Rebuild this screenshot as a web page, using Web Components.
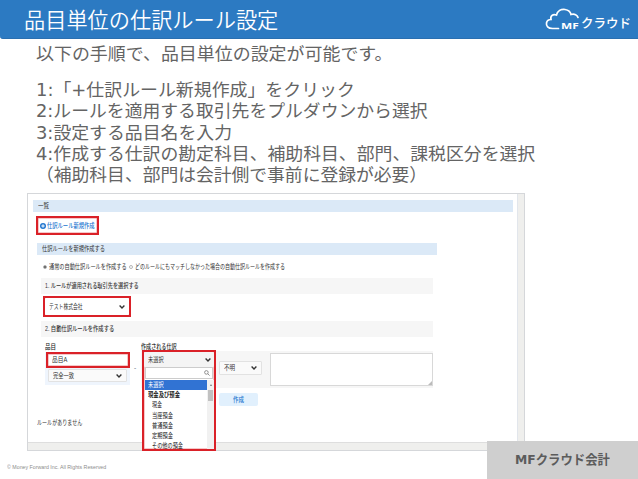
<!DOCTYPE html>
<html lang="ja">
<head>
<meta charset="utf-8">
<title>品目単位の仕訳ルール設定</title>
<style>
  body {
    margin: 0;
    width: 638px;
    height: 479px;
    overflow: hidden;
    background: #fff;
    font-family: "DejaVu Sans", "Noto Sans CJK JP", sans-serif;
  }
</style>
</head>
<body>
<slide-page></slide-page>

<script>
// one line of text, squeezed horizontally to the width attribute
class FitText extends HTMLElement {
  constructor() {
    super();
    this.attachShadow({ mode: 'open' });
    this.shadowRoot.innerHTML = `
      <style>
        :host {
          display: block;
          flex: none;
          white-space: nowrap;
        }
        span {
          display: inline-block;
          transform-origin: left center;
        }
      </style>
      <span><slot></slot></span>
    `;
  }

  connectedCallback() {
    const width = Number(this.getAttribute('width'));
    const span = this.shadowRoot.querySelector('span');
    this.style.width = `${width}px`;
    span.style.transform = `scaleX(${width / span.offsetWidth})`;
  }
}

class SlideHeader extends HTMLElement {
  constructor() {
    super();
    this.attachShadow({ mode: 'open' });
    this.shadowRoot.innerHTML = `
      <style>
        :host {
          display: flex;
          align-items: center;
          justify-content: space-between;
          box-sizing: border-box;
          height: 39px;
          padding: 0 7px 0 24px;
          background: #2c7ac2;
          border-bottom: 1px solid #2a6fb0;
          border-radius: 0 0 0 3px;
          color: #fff;
        }
        .title {
          font-size: 21.2px;
          font-weight: 350;
          line-height: 38px;
          padding-top: 3px;
        }
        .logo {
          display: flex;
          align-items: flex-end;
          height: 24px;
          margin-top: 2px;
        }
        svg {
          width: 35px;
          height: 24px;
          margin-right: -19px;
        }
        .mf {
          font: bold 9.5px/10px "Open Sans", sans-serif;
          padding-bottom: 1px;
          margin-right: 3px;
        }
        .kana {
          font-size: 12.5px;
          font-weight: 500;
          line-height: 13px;
          padding-bottom: 2px;
        }
      </style>
      <fit-text class="title" width="254">品目単位の仕訳ルール設定</fit-text>
      <div class="logo">
        <svg viewBox="0 0 35 24" fill="none" stroke="#fff" stroke-width="1.7" stroke-linecap="round">
          <path d="M13.500 20.500H7.500C3 20.500 1 18 1.500 15C2 12.500 4 11.500 6 11.500C5 8 8 5.500 11.500 7C12.500 3 16 1 20 1.500C23.500 2 25.500 4 26 6.500C29.500 5.500 32.500 7 33 9.500"/>
        </svg>
        <fit-text class="mf" width="17.500">MF</fit-text>
        <fit-text class="kana" width="50">クラウド</fit-text>
      </div>
    `;
  }
}

class StepList extends HTMLElement {
  constructor() {
    super();
    this.attachShadow({ mode: 'open' });
    this.shadowRoot.innerHTML = `
      <style>
        :host {
          display: block;
          padding: 5px 0 0 36px;
          font-size: 17.6px;
          line-height: 21.2px;
          color: #646464;
        }
        .lead {
          margin-bottom: 15px;
        }
      </style>
      <fit-text class="lead" width="356">以下の手順で、品目単位の設定が可能です。</fit-text>
      <fit-text width="318.500">1:「+仕訳ルール新規作成」をクリック</fit-text>
      <fit-text width="392">2:ルールを適用する取引先をプルダウンから選択</fit-text>
      <fit-text width="196">3:設定する品目名を入力</fit-text>
      <fit-text width="499">4:作成する仕訳の勘定科目、補助科目、部門、課税区分を選択</fit-text>
      <fit-text width="391">（補助科目、部門は会計側で事前に登録が必要）</fit-text>
    `;
  }
}

// select box with a chevron at its right end
class SelectBox extends HTMLElement {
  constructor() {
    super();
    this.attachShadow({ mode: 'open' });
    this.shadowRoot.innerHTML = `
      <style>
        :host {
          display: flex;
          align-items: center;
          justify-content: space-between;
          box-sizing: border-box;
          border: 1px solid #e2e2e2;
          border-radius: 1px;
          background: #fafafa;
          padding: 0 4px;
        }
        svg {
          width: 6px;
          height: 4px;
        }
      </style>
      <slot></slot>
      <svg viewBox="0 0 6 4" fill="none" stroke="#333" stroke-width="1.4">
        <path d="M.6 .6L3 3L5.400 .6"/>
      </svg>
    `;
  }
}

// red frame that marks a step
class RedFrame extends HTMLElement {
  constructor() {
    super();
    this.attachShadow({ mode: 'open' });
    this.shadowRoot.innerHTML = `
      <style>
        :host {
          display: flex;
          box-sizing: border-box;
          border: 2px solid #da2128;
          box-shadow: inset 0 0 0 .5px #da212880;
        }
      </style>
      <slot></slot>
    `;
  }
}

class AccountMenu extends HTMLElement {
  constructor() {
    super();
    this.attachShadow({ mode: 'open' });
    this.shadowRoot.innerHTML = `
      <style>
        :host {
          display: block;
          background: #fff;
        }
        red-frame {
          width: 74px;
          height: 101px;
          flex-direction: column;
          overflow: hidden;
        }
        select-box {
          height: 15px;
          flex: none;
          border: 0;
          background: #f4f4f4;
          padding: 1px 3px 0 4px;
        }
        .search {
          display: flex;
          align-items: center;
          justify-content: flex-end;
          flex: none;
          box-sizing: border-box;
          height: 12px;
          margin: 0 1px 1px;
          padding-right: 2px;
          border: 1px solid #ccc;
        }
        .search svg {
          width: 6px;
          height: 6px;
        }
        .list {
          display: flex;
          flex: 1;
          min-height: 0;
          padding-left: 1px;
        }
        .items {
          flex: 1;
          line-height: 10.2px;
          color: #222;
        }
        .items fit-text {
          margin-left: 7px;
        }
        .items .group {
          margin-left: 3px;
          font-weight: bold;
        }
        .selected {
          height: 10px;
          padding-left: 3px;
          background: #3173d3;
          color: #fff;
        }
        .items .selected fit-text {
          margin-left: 0;
        }
        .scroll {
          width: 7px;
          background: #f1f1f1;
        }
        .arrow {
          margin: 4px auto 4px;
          width: 0;
          border: 1.5px solid transparent;
          border-bottom: 2px solid #777;
          border-top: 0;
        }
        .thumb {
          height: 11px;
          margin: 0 1px;
          background: #c1c1c1;
        }
      </style>
      <red-frame>
        <select-box><fit-text width="16">未選択</fit-text></select-box>
        <div class="search">
          <svg viewBox="0 0 6 6" fill="none" stroke="#777" stroke-width=".8">
            <circle cx="2.400" cy="2.400" r="1.800"/><path d="M3.800 3.800L5.600 5.600"/>
          </svg>
        </div>
        <div class="list">
          <div class="items">
            <div class="selected"><fit-text width="16">未選択</fit-text></div>
            <fit-text class="group" width="32">現金及び預金</fit-text>
            <fit-text width="10">現金</fit-text>
            <fit-text width="21">当座預金</fit-text>
            <fit-text width="21">普通預金</fit-text>
            <fit-text width="21">定期預金</fit-text>
            <fit-text width="31">その他の預金</fit-text>
          </div>
          <div class="scroll"><div class="arrow"></div><div class="thumb"></div></div>
        </div>
      </red-frame>
    `;
  }
}

class RulePanel extends HTMLElement {
  constructor() {
    super();
    this.attachShadow({ mode: 'open' });
    this.shadowRoot.innerHTML = `
      <style>
        :host {
          display: grid;
          grid-template-columns: 489px 7px;
          grid-template-rows: 248px 8px;
          box-sizing: border-box;
          width: 498px;
          height: 258px;
          border: 1px solid #d5d7da;
          font: 6.5px/10px "Liberation Sans", "Noto Sans CJK JP", sans-serif;
          color: #333;
        }
        .page {
          padding: 6px 4px 0 5px;
        }
        .vbar {
          background: #efefed;
          border-left: 1px solid #e2e6ec;
          box-sizing: border-box;
        }
        .hbar {
          grid-column: 1 / 3;
          background: #efefed;
          border-top: 1px solid #dedede;
          box-sizing: border-box;
        }
        .bar {
          display: flex;
          align-items: center;
          box-sizing: border-box;
          height: 12px;
          padding-left: 5px;
          background: #dbe9f7;
        }
        .new {
          align-items: center;
          width: 63px;
          height: 19px;
          margin: 4px 0 8px 3px;
          padding-left: 2px;
          color: #2276cf;
        }
        .new svg {
          width: 6px;
          height: 6px;
          margin-right: 1px;
        }
        .new fit-text {
          font-weight: 500;
        }
        .form {
          width: 400px;
          margin-left: 4px;
        }
        .radios {
          display: flex;
          align-items: center;
          height: 23px;
          padding: 1px 0 0 6px;
          box-sizing: border-box;
        }
        .radio {
          width: 4px;
          height: 4px;
          box-sizing: border-box;
          border: 1px solid #b5b5b5;
          border-radius: 50%;
          margin-right: 2px;
        }
        .radio.on {
          background: #555;
        }
        .radios fit-text + .radio {
          margin-left: 2px;
        }
        .section {
          display: flex;
          align-items: center;
          width: 392px;
          height: 16px;
          margin-left: 4px;
          padding-left: 4px;
          box-sizing: border-box;
          background: #f6f6f6;
          font-weight: 500;
        }
        .partner {
          width: 88px;
          height: 21px;
          margin: 2px 0 4px 6px;
        }
        .partner select-box {
          flex: 1;
          border: 0;
          background: #fff;
        }
        .labels {
          display: flex;
          gap: 85px;
          height: 9px;
          margin: 5px 0 0 12px;
          font-weight: 500;
          color: #222;
        }
        .fields {
          display: flex;
          margin-left: 12px;
        }
        .item {
          width: 85px;
          height: 33px;
          margin-top: 1px;
          background: #eff5fd;
        }
        .item red-frame {
          width: 84px;
          height: 16px;
          margin-left: 1px;
          padding-left: 4px;
          align-items: center;
          background: #fff;
        }
        .item select-box {
          width: 79px;
          height: 13px;
          margin: 1px 0 0 3px;
        }
        .dot {
          width: 11px;
          padding: 12px 0 0 4px;
          box-sizing: border-box;
          color: #678;
        }
        .entry {
          display: flex;
          align-items: flex-start;
          width: 292px;
          height: 37px;
          padding-left: 78px;
          box-sizing: border-box;
          background: #f6f6f6;
          position: relative;
        }
        account-menu {
          position: absolute;
          left: 1px;
          top: -1px;
        }
        .entry select-box {
          width: 43px;
          height: 14px;
          margin: 10px 8px 0 0;
        }
        .memo {
          width: 163px;
          height: 33px;
          margin-top: 2px;
          box-sizing: border-box;
          border: 1px solid #d8d8d8;
          background: #fff;
          display: flex;
          align-items: flex-end;
          justify-content: flex-end;
        }
        .memo svg {
          width: 4px;
          height: 4px;
        }
        .create {
          display: flex;
          align-items: center;
          justify-content: center;
          width: 39px;
          height: 13px;
          margin: 5px 0 0 186px;
          box-sizing: border-box;
          border-radius: 2px;
          background: #e1f0fd;
          color: #2276cf;
          font-weight: 500;
        }
        .empty {
          margin: 12px 0 0 4px;
        }
      </style>
      <div class="page">
        <div class="bar"><fit-text width="11">一覧</fit-text></div>
        <red-frame class="new">
          <svg viewBox="0 0 6 6"><circle cx="3" cy="3" r="3" fill="#2276cf"/><path d="M3 1.300V4.700M1.300 3H4.700" stroke="#fff"/></svg>
          <fit-text width="48">仕訳ルール新規作成</fit-text>
        </red-frame>
        <div class="form">
          <div class="bar"><fit-text width="63">仕訳ルールを新規作成する</fit-text></div>
          <div class="radios">
            <i class="radio on"></i><fit-text width="78">通常の自動仕訳ルールを作成する</fit-text>
            <i class="radio"></i><fit-text width="150">どのルールにもマッチしなかった場合の自動仕訳ルールを作成する</fit-text>
          </div>
          <div class="section"><fit-text width="94">1. ルールが適用される取引先を選択する</fit-text></div>
          <red-frame class="partner"><select-box><fit-text width="34">テスト株式会社</fit-text></select-box></red-frame>
          <div class="section"><fit-text width="69">2. 自動仕訳ルールを作成する</fit-text></div>
        </div>
        <div class="labels">
          <fit-text width="11">品目</fit-text>
          <fit-text width="36">作成される仕訳</fit-text>
        </div>
        <div class="fields">
          <div class="item">
            <red-frame><fit-text width="15">品目A</fit-text></red-frame>
            <select-box><fit-text width="21">完全一致</fit-text></select-box>
          </div>
          <div class="dot">-</div>
          <div class="entry">
            <account-menu></account-menu>
            <select-box><fit-text width="11">不明</fit-text></select-box>
            <div class="memo"><svg viewBox="0 0 4 4"><path d="M4 0V4H0Z" fill="#bbb"/></svg></div>
          </div>
        </div>
        <div class="create"><fit-text width="11">作成</fit-text></div>
        <div class="empty"><fit-text width="45">ルールがありません</fit-text></div>
      </div>
      <div class="vbar"></div>
      <div class="hbar"></div>
    `;
  }
}

class ProductBadge extends HTMLElement {
  constructor() {
    super();
    this.attachShadow({ mode: 'open' });
    this.shadowRoot.innerHTML = `
      <style>
        :host {
          display: flex;
          align-items: center;
          justify-content: center;
          box-sizing: border-box;
          width: 151px;
          height: 38px;
          padding-bottom: 3px;
          background: #cfcfcf;
          color: #5c5c5c;
          font-size: 13px;
          font-weight: bold;
        }
      </style>
      <fit-text width="95"><slot></slot></fit-text>
    `;
  }
}

class SlidePage extends HTMLElement {
  constructor() {
    super();
    this.attachShadow({ mode: 'open' });
    this.shadowRoot.innerHTML = `
      <style>
        :host {
          display: block;
          position: relative;
          height: 479px;
        }
        rule-panel {
          margin: 7px 0 0 27px;
        }
        .copyright {
          margin: 12px 0 0 7px;
          font: 6px/9px "Liberation Sans", sans-serif;
          color: #8c8c8c;
        }
        product-badge {
          position: absolute;
          right: 0;
          bottom: 0;
        }
      </style>
      <slide-header></slide-header>
      <step-list></step-list>
      <rule-panel></rule-panel>
      <fit-text class="copyright" width="99">© Money Forward Inc. All Rights Reserved</fit-text>
      <product-badge>MFクラウド会計</product-badge>
    `;
  }
}

customElements.define('fit-text', FitText);
customElements.define('slide-header', SlideHeader);
customElements.define('step-list', StepList);
customElements.define('select-box', SelectBox);
customElements.define('red-frame', RedFrame);
customElements.define('account-menu', AccountMenu);
customElements.define('rule-panel', RulePanel);
customElements.define('product-badge', ProductBadge);
customElements.define('slide-page', SlidePage);
</script>
</body>
</html>
